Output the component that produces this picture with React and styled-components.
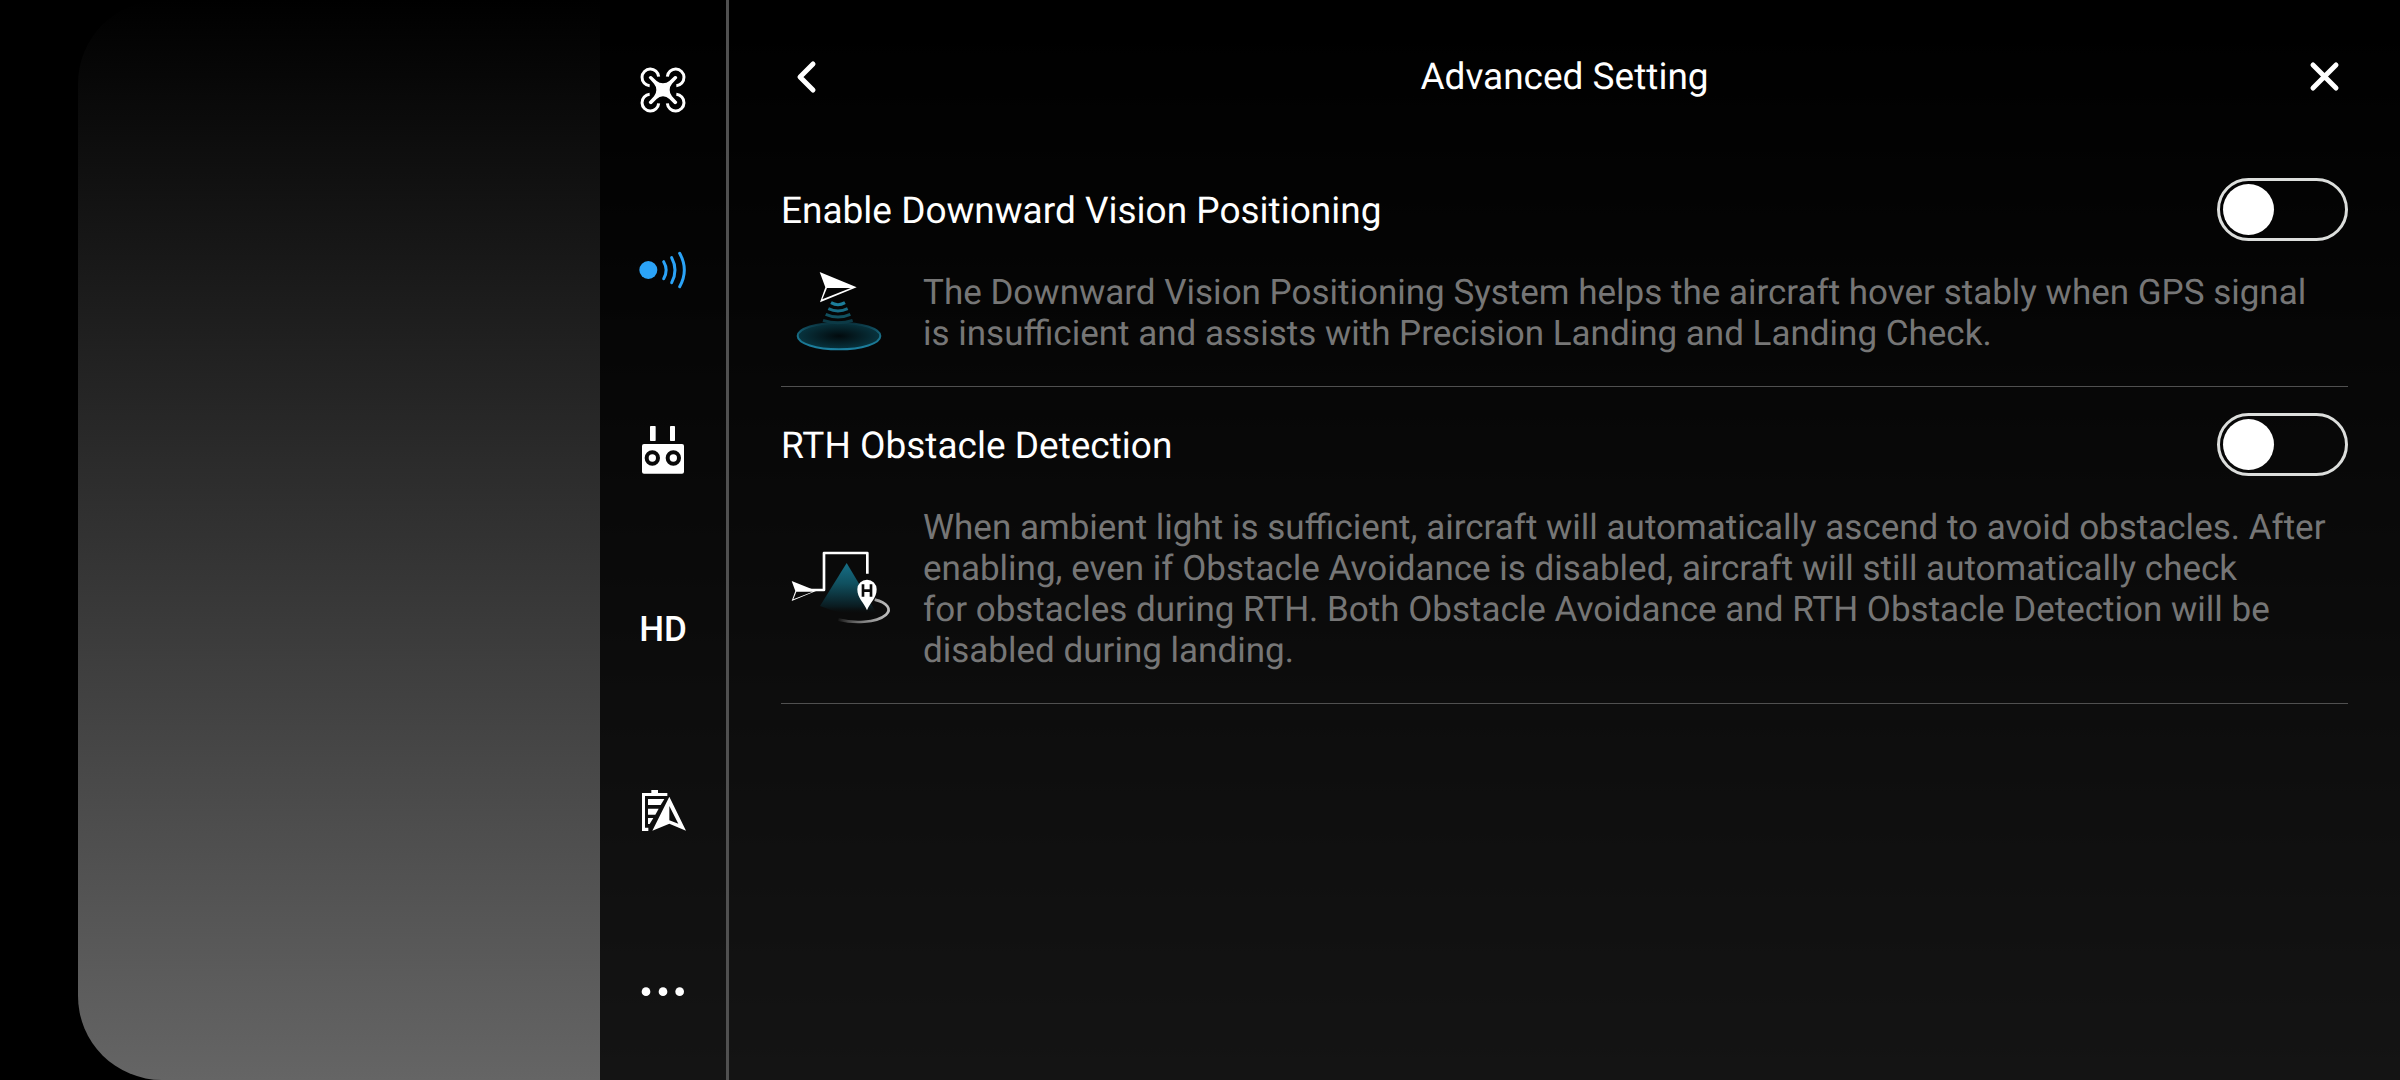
import React, { useState } from "react";
import styled, { createGlobalStyle } from "styled-components";

const GlobalStyle = createGlobalStyle`
  * { box-sizing: border-box; }
  html, body { margin: 0; background: #000; }
  body {
    font-family: Roboto, "Liberation Sans", sans-serif;
    color: #fff;
    text-rendering: geometricPrecision;
  }
`;

const Screen = styled.div`
  display: flex;
  min-height: 100vh;
  padding-left: 78px;
  background: #000;
`;

const Viewport = styled.div`
  flex: 1;
  display: flex;
  border-radius: 84px 0 0 84px;
  overflow: hidden;
  background: linear-gradient(#000, #656565);
`;

const Preview = styled.div`
  flex: 522;
`;

const Panel = styled.section`
  flex: 1800;
  display: flex;
  background: rgba(0, 0, 0, 0.8);
`;

const Nav = styled.nav`
  width: 129px;
  flex: none;
  display: flex;
  flex-direction: column;
  border-right: 3px solid #505050;
`;

const NavButton = styled.button`
  flex: 1;
  display: flex;
  align-items: center;
  justify-content: center;
  padding: 0;
  border: 0;
  background: none;
  color: ${(p) => (p.$active ? "#2ba3f7" : "#fff")};
  font: 500 35px/60px Roboto, "Liberation Sans", sans-serif;
  cursor: pointer;

  svg { width: 60px; height: 60px; }
`;

const Content = styled.main`
  flex: 1;
  min-width: 0;
  display: flex;
  flex-direction: column;
`;

const Header = styled.header`
  display: grid;
  grid-template-columns: 48px 1fr 48px;
  align-items: center;
  height: 152px;
  padding: 0 52px;
`;

const IconButton = styled.button`
  display: flex;
  width: 48px;
  height: 48px;
  padding: 0;
  border: 0;
  background: none;
  color: #fff;
  cursor: pointer;
`;

const Title = styled.h1`
  margin: 0;
  padding-top: 4px;
  text-align: center;
  font-size: 37px;
  font-weight: 400;
  line-height: 44px;
`;

const Setting = styled.section`
  display: flex;
  flex-direction: column;
  gap: 31px;
  margin: 0 52px;
  padding: 26px 0 32px;
  border-bottom: 1px solid #505050;
`;

const SettingHead = styled.div`
  display: flex;
  align-items: center;
  justify-content: space-between;
`;

const Label = styled.label`
  padding-top: 4px;
  font-size: 37px;
  line-height: 44px;
`;

const Toggle = styled.input`
  appearance: none;
  display: flex;
  width: 131px;
  height: 63px;
  margin: 0;
  padding: 3px;
  border: 3px solid #dcdedc;
  border-radius: 32px;
  cursor: pointer;

  &::before {
    content: "";
    width: 51px;
    height: 51px;
    border-radius: 50%;
    background: #fff;
  }

  &:checked {
    justify-content: flex-end;
    background: #2ba3f7;
  }
`;

const SettingBody = styled.div`
  display: flex;
  align-items: center;
  gap: 22px;

  svg { flex: none; width: 120px; height: 82px; }
`;

const Description = styled.p`
  flex: 1;
  margin: 0;
  color: #767676;
  font-size: 35px;
  line-height: 41px;
`;

const AircraftIcon = () => (
  <svg viewBox="99 60 180 180" fill="none" stroke="currentColor" strokeWidth="9" aria-hidden="true">
    <path d="M149 137A25 25 0 1 1 176 110" />
    <path d="M229 137A25 25 0 1 0 202 110" />
    <path d="M149 163A25 25 0 1 0 176 190" />
    <path d="M229 163A25 25 0 1 1 202 190" />
    <path
      d="M146 113Q148 106 155 109L170 123Q178 130 189 130Q200 130 208 123L223 109Q231 106 232 114L216 131Q209 139 209 150Q209 161 216 169L232 186Q231 194 223 192L208 177Q200 169 189 169Q178 169 170 177L155 192Q147 194 146 186L162 169Q169 161 169 150Q169 139 162 131Z"
      fill="currentColor"
      stroke="none"
    />
  </svg>
);

const SensingIcon = () => (
  <svg viewBox="99 30 180 180" fill="none" stroke="currentColor" strokeWidth="9" strokeLinecap="round" aria-hidden="true">
    <circle cx="145" cy="120" r="27" fill="currentColor" stroke="none" />
    <path d="M191 95Q206 120 191 146" />
    <path d="M215 83Q235 120 215 158" />
    <path d="M239 70Q267 120 239 170" />
  </svg>
);

const ControllerIcon = () => (
  <svg viewBox="99 30 180 180" fill="currentColor" aria-hidden="true">
    <rect x="150" y="48" width="17" height="45" rx="2" />
    <rect x="210" y="48" width="15" height="45" rx="2" />
    <rect x="126" y="102" width="126" height="89" rx="6" />
    <g fill="none" stroke="#090909" strokeWidth="12">
      <circle cx="157" cy="144" r="17" />
      <circle cx="220" cy="144" r="17" />
    </g>
  </svg>
);

const BatteryIcon = () => (
  <svg viewBox="99 30 180 180" fill="currentColor" aria-hidden="true">
    <path d="M126 69H154V60H174V69H202V78H135V173H145V183H126Z" />
    <path d="M144 87H193L182 105H144Z" />
    <path d="M144 116H176L166 134H144Z" />
    <path d="M144 144H160L149 162H144Z" />
    <path fillRule="evenodd" d="M208 80L258 182L208 161L157 182ZM208 108V151L235 161Z" />
  </svg>
);

const MoreIcon = () => (
  <svg viewBox="99 30 180 180" fill="currentColor" aria-hidden="true">
    <circle cx="138" cy="125" r="13" />
    <circle cx="189" cy="125" r="13" />
    <circle cx="239" cy="125" r="13" />
  </svg>
);

const BackIcon = () => (
  <svg viewBox="0 0 48 48" width="48" height="48" fill="none" stroke="currentColor" strokeWidth="5" strokeLinecap="round" strokeLinejoin="round" aria-hidden="true">
    <path d="M32 12L19 25L32 38" />
  </svg>
);

const CloseIcon = () => (
  <svg viewBox="0 0 48 48" width="48" height="48" fill="none" stroke="currentColor" strokeWidth="5" strokeLinecap="round" aria-hidden="true">
    <path d="M13 13L36 36M36 13L13 36" />
  </svg>
);

const VisionArt = () => (
  <svg viewBox="33 36 360 246" fill="none" aria-hidden="true">
    <defs>
      <radialGradient id="pool">
        <stop offset="0" stopColor="#020a0d" />
        <stop offset="1" stopColor="#08343f" />
      </radialGradient>
      <linearGradient id="rim" x1="0" y1="0" x2="0" y2="1">
        <stop offset="0" stopColor="#0a2f3a" />
        <stop offset="0.5" stopColor="#186f88" />
        <stop offset="1" stopColor="#1c80a0" />
      </linearGradient>
    </defs>
    <ellipse cx="207" cy="228" rx="124" ry="40" fill="url(#pool)" stroke="url(#rim)" strokeWidth="6" />
    <g strokeWidth="9">
      <path d="M183 128Q204 140 225 128" stroke="#1c7d9a" />
      <path d="M175 146Q204 160 233 146" stroke="#186c85" />
      <path d="M167 163Q204 179 241 163" stroke="#11505f" />
      <path d="M159 181Q204 196 248 181" stroke="#0c3a46" />
    </g>
    <path d="M149 36L260 82L150 127L166 82Z" fill="#fff" />
    <path d="M171 84H242L157 118Z" fill="#050505" />
  </svg>
);

const ObstacleArt = () => (
  <svg viewBox="33 54 360 246" fill="none" aria-hidden="true">
    <defs>
      <linearGradient id="cone" x1="0" y1="0" x2="0" y2="1">
        <stop offset="0" stopColor="#166f87" />
        <stop offset="0.4" stopColor="#10505f" />
        <stop offset="0.85" stopColor="#0a1a1f" />
        <stop offset="1" stopColor="#0a0a0a" stopOpacity="0" />
      </linearGradient>
      <linearGradient id="orbit" gradientUnits="userSpaceOnUse" x1="200" y1="0" x2="350" y2="0">
        <stop offset="0" stopColor="#bbb" stopOpacity="0" />
        <stop offset="0.6" stopColor="#888" />
        <stop offset="1" stopColor="#bbb" />
      </linearGradient>
    </defs>
    <path d="M230 99L320 250Q230 262 150 228Z" fill="url(#cone)" />
    <path d="M314 209C352 218 366 238 348 254C318 280 250 280 205 269" stroke="url(#orbit)" strokeWidth="8" />
    <path d="M110 180H162V69H292V131" stroke="#fff" strokeWidth="8" strokeLinejoin="round" />
    <path d="M65 153L127 178L138 183L65 213L76 183Z" fill="#fff" />
    <path d="M79 185H128L70 208Z" fill="#090909" />
    <path d="M291 241C282 218 262 205 262 178A29 29 0 0 1 320 178C320 205 300 218 291 241Z" fill="#fff" />
    <path d="M279 163V200M303 163V200M279 182H303" stroke="#090909" strokeWidth="8" />
  </svg>
);

const tabs = [
  { id: "Aircraft", icon: <AircraftIcon /> },
  { id: "Sensing", icon: <SensingIcon /> },
  { id: "Remote controller", icon: <ControllerIcon /> },
  { id: "Image transmission", icon: "HD" },
  { id: "Battery", icon: <BatteryIcon /> },
  { id: "More", icon: <MoreIcon /> },
];

function SettingRow({ id, label, art, children }) {
  const [on, setOn] = useState(false);
  return (
    <Setting>
      <SettingHead>
        <Label htmlFor={id}>{label}</Label>
        <Toggle id={id} type="checkbox" role="switch" checked={on} onChange={() => setOn(!on)} />
      </SettingHead>
      <SettingBody>
        {art}
        <Description>{children}</Description>
      </SettingBody>
    </Setting>
  );
}

export default function App() {
  const [active, setActive] = useState("Sensing");
  return (
    <Screen>
      <GlobalStyle />
      <Viewport>
        <Preview />
        <Panel>
          <Nav>
            {tabs.map((tab) => (
              <NavButton key={tab.id} aria-label={tab.id} $active={tab.id === active} onClick={() => setActive(tab.id)}>
                {tab.icon}
              </NavButton>
            ))}
          </Nav>
          <Content>
            <Header>
              <IconButton aria-label="Back"><BackIcon /></IconButton>
              <Title>Advanced Setting</Title>
              <IconButton aria-label="Close"><CloseIcon /></IconButton>
            </Header>
            <SettingRow id="vision" label="Enable Downward Vision Positioning" art={<VisionArt />}>
              The Downward Vision Positioning System helps the aircraft hover stably when GPS signal
              is&nbsp;insufficient and assists with Precision Landing and Landing Check.
            </SettingRow>
            <SettingRow id="rth" label="RTH Obstacle Detection" art={<ObstacleArt />}>
              When ambient light is sufficient, aircraft will automatically ascend to avoid obstacles. After
              enabling, even if Obstacle Avoidance is disabled, aircraft will still automatically check
              for&nbsp;obstacles during RTH. Both Obstacle Avoidance and RTH Obstacle Detection will be
              disabled during landing.
            </SettingRow>
          </Content>
        </Panel>
      </Viewport>
    </Screen>
  );
}
